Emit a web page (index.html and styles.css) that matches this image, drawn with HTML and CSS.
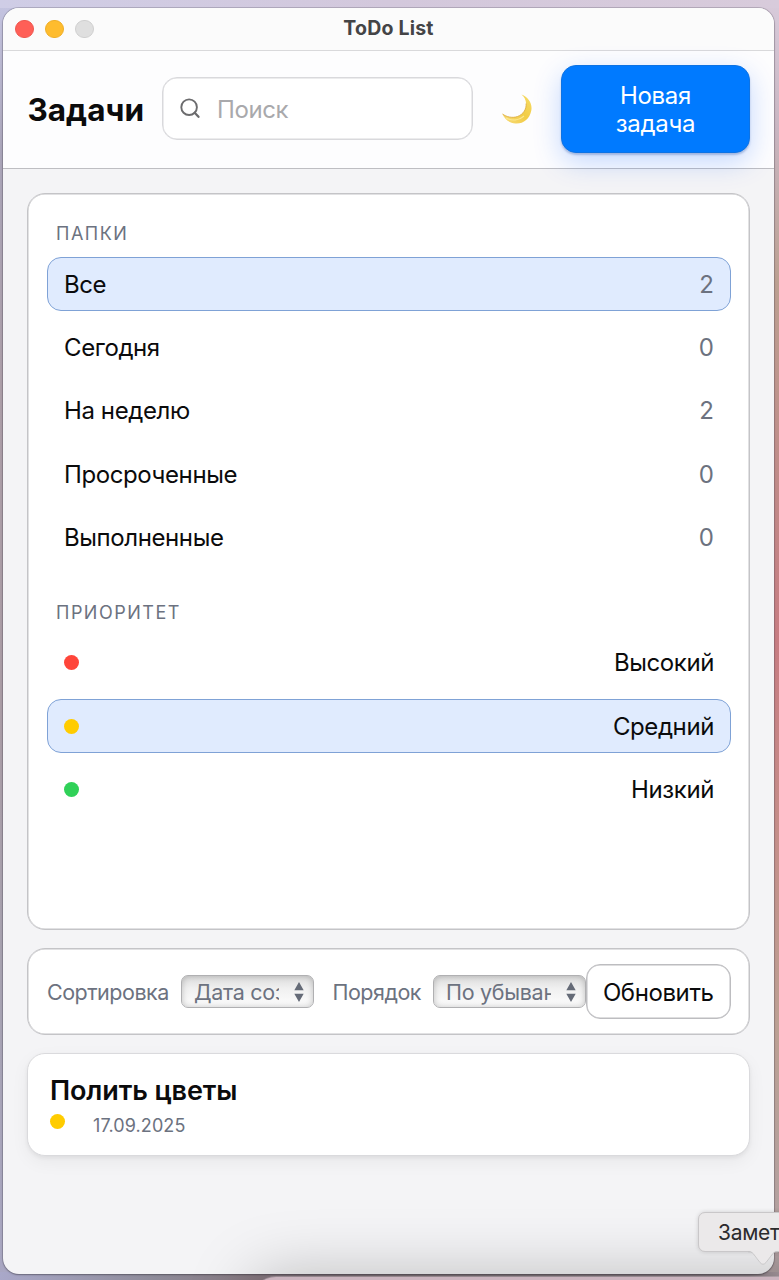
FILE: index.html
```html
<!DOCTYPE html>
<html lang="ru">
<head>
<meta charset="utf-8">
<title>ToDo List</title>
<link rel="stylesheet" href="styles.css">
</head>
<body>
<div class="desktop">
  <div class="window">
    <div class="titlebar">
      <div class="lights"><i class="light close"></i><i class="light minimize"></i><i class="light disabled"></i></div>
      <span class="window-title">ToDo List</span>
    </div>
    <header class="header">
      <h1 class="heading">Задачи</h1>
      <div class="search">
        <svg class="search-icon" width="22" height="22" viewBox="0 0 22 22" fill="none" stroke="#6c6c6e" stroke-linecap="round"><circle cx="9.1" cy="9.2" r="7.8" stroke-width="1.9"/><path d="M14.700 14.800l3.800 4" stroke-width="2.300"/></svg>
        <span class="placeholder">Поиск</span>
      </div>
      <svg class="moon" width="32" height="32" viewBox="0 0 32 32">
        <defs><linearGradient id="moonFill" x1="0" y1="1" x2="1" y2="0"><stop offset="0" stop-color="#f8dc7c"/><stop offset=".5" stop-color="#f2cc45"/><stop offset="1" stop-color="#f6dc67"/></linearGradient></defs>
        <path d="M20.5 1.4C27.5 4 31.6 10.500 30.300 17.500C28.800 26 22 31.100 14.500 30.500C8.500 30 3.500 26.500 1.500 21C5.500 24 11.500 25.300 16.500 23.500C22.500 21.300 25.500 16 25.100 10.500C24.900 6.500 23 3.500 20.500 1.400Z" fill="url(#moonFill)"/>
        <path d="M1.500 21C5.500 24 11.500 25.300 16.500 23.500C22.500 21.300 25.500 16 25.100 10.500" fill="none" stroke="#dba93b" stroke-width=".8"/>
        <path d="M5 25C11 28 18 27.500 23 23" fill="none" stroke="#fbe88f" stroke-width="1.200"/>
      </svg>
      <button class="primary">Новая<br>задача</button>
    </header>
    <main class="content">
      <nav class="panel sidebar">
        <h2 class="section">Папки</h2>
        <div class="row active"><span>Все</span><span class="count">2</span></div>
        <div class="row"><span>Сегодня</span><span class="count">0</span></div>
        <div class="row"><span>На неделю</span><span class="count">2</span></div>
        <div class="row"><span>Просроченные</span><span class="count">0</span></div>
        <div class="row"><span>Выполненные</span><span class="count">0</span></div>
        <h2 class="section priority">Приоритет</h2>
        <div class="row"><i class="dot red"></i><span>Высокий</span></div>
        <div class="row active"><i class="dot yellow"></i><span>Средний</span></div>
        <div class="row"><i class="dot green"></i><span>Низкий</span></div>
      </nav>
      <section class="panel toolbar">
        <span class="label sort-label">Сортировка</span>
        <div class="select sort"><span class="value">Дата соз</span><svg class="arrows" width="10" height="20" viewBox="0 0 10 20" fill="#656b77"><path d="M5 0l4.700 8.200h-9.400zM5 20l4.700-8.200h-9.400z"/></svg></div>
        <span class="label order-label">Порядок</span>
        <div class="select order"><span class="value">По убыван</span><svg class="arrows" width="10" height="20" viewBox="0 0 10 20" fill="#656b77"><path d="M5 0l4.700 8.200h-9.400zM5 20l4.700-8.200h-9.400z"/></svg></div>
        <button class="refresh">Обновить</button>
      </section>
      <article class="card">
        <h3 class="card-title">Полить цветы</h3>
        <div class="meta"><i class="dot yellow"></i><time class="date">17.09.2025</time></div>
      </article>
    </main>
  </div>
  <div class="dock-clip"><div class="dock"></div></div>
  <div class="tooltip"><span>Заметки</span><svg class="tip" width="30" height="15" viewBox="0 0 30 15"><path d="M0 0C4 0 5 2 7 5L12 11.500Q15 15 18 11.500L23 5C25 2 26 0 30 0Z" fill="#ebe9ea"/><path d="M0 .8C4 .8 5 2 7 5L12 11.500Q15 15 18 11.500L23 5C25 2 26 .8 30 .8" fill="none" stroke="#c3c1c3" stroke-width=".8"/></svg></div>
</div>
</body>
</html>
```
FILE: styles.css
```css
* { box-sizing: border-box; }
body { margin: 0; font-family: Inter, "Noto Sans", sans-serif; color: #0b0b0c; }
h1, h2, h3 { margin: 0; }
button { font: inherit; margin: 0; padding: 0; }
i { display: block; flex: none; }

.desktop {
  position: relative;
  width: 779px;
  height: 1280px;
  overflow: hidden;
  padding: 8px 5px 6px 3px;
  background:
    linear-gradient(90deg, #cfcde6, #d3c8dc 50%, #d8cbdb) 0 0 / 100% 8px no-repeat,
    linear-gradient(90deg, #a9a8c9, #8e8b99 20%, #86777f 33%, #8b7f86 96%, #ab9da3) 0 1272px / 100% 8px no-repeat,
    linear-gradient(#c5c5e2, #aaa5b9 12%, #ac9ea8 30%, #aa9ca5 55%, #a7a2b0 75%, #a9a7c3) 0 0 / 20px 100% no-repeat,
    linear-gradient(#d8cbdb, #c9b6c2 10%, #bca091 22%, #c08a88 38%, #c77c82 50%, #c58e89 65%, #bca093 80%, #b0a1a4) 100% 0 / 24px 100% no-repeat;
}

.window {
  display: flex;
  flex-direction: column;
  width: 771px;
  height: 1266px;
  overflow: hidden;
  border-radius: 16px;
  background: #f4f4f6;
  box-shadow: 0 0 0 1px rgba(80, 75, 90, .25), 0 1px 2px rgba(0, 0, 0, .3);
}
.titlebar {
  position: relative;
  display: flex;
  align-items: center;
  justify-content: center;
  flex: none;
  height: 43px;
  border-bottom: 1px solid #d9d9db;
  background: #fbfbfb;
}
.lights { position: absolute; left: 12px; top: 11.500px; display: flex; gap: 11.500px; }
.light { width: 18.500px; height: 18.500px; border-radius: 50%; border: 1px solid; }
.close { background: #ff5f57; border-color: #ee574f; }
.minimize { background: #febc2e; border-color: #efae27; }
.disabled { background: #dfdfdf; border-color: #cfcfcf; }
.window-title { font-size: 19.500px; font-weight: 700; color: #444446; line-height: 24px; margin-top: -3px; letter-spacing: .2px; }

.header {
  display: flex;
  align-items: center;
  flex: none;
  height: 118px;
  padding: 0 24px 2px 24.500px;
  background: #fdfdfe;
  border-bottom: 1.500px solid #bebec2;
}
.heading { width: 134.500px; flex: none; padding-top: 2px; font-size: 31.500px; line-height: 38px; font-weight: 700; letter-spacing: 0; }
.search {
  display: flex;
  align-items: center;
  flex: none;
  width: 311px;
  height: 63px;
  padding-left: 17px;
  border: 1px solid #d9d9dc;
  box-shadow: inset 0 0 0 .5px #d9d9dc;
  border-radius: 15px;
  background: #fff;
}
.search-icon { margin-top: 1px; }
.placeholder { margin-left: 15px; padding-top: 2px; font-size: 24px; color: #a9a9ac; letter-spacing: -.4px; }
.moon { flex: none; margin-left: 27.500px; }
.primary {
  flex: none;
  width: 189px;
  height: 88px;
  padding-top: 2px;
  margin-left: auto;
  border: 1px solid #0d73e4;
  border-radius: 15px;
  background: #007aff;
  color: #fff;
  font-size: 24px;
  line-height: 27.500px;
  letter-spacing: -.3px;
  box-shadow: 0 2px 2px rgba(40, 80, 160, .3), 0 9px 28px rgba(0, 90, 255, .23);
  position: relative;
  z-index: 1;
}

.content { display: flex; flex-direction: column; gap: 18px; padding: 24px 24px 0; }
.panel { border: 1px solid #c4c4c7; box-shadow: inset 0 0 0 .5px #c4c4c7; border-radius: 18px; background: #fff; }
.sidebar { height: 737px; padding: 27px 18.500px 0 19px; }
.section {
  height: 36px;
  padding-left: 9px;
  font-size: 18px;
  line-height: 26px;
  font-weight: 400;
  letter-spacing: 1.500px;
  text-transform: uppercase;
  color: #6c7280;
}
.section.priority { margin-top: 35.400px; height: 35.700px; }
.row {
  display: flex;
  align-items: center;
  justify-content: space-between;
  height: 54px;
  padding: 0 15.500px 0 16px;
  border: 1px solid transparent;
  border-radius: 14px;
  font-size: 24px;
  letter-spacing: -.4px;
}
.row + .row { margin-top: 9.400px; }
.row.active { background: #e0ebfe; border-color: #7fa2d6; }
.count { color: #6c7280; letter-spacing: 0; }
.dot { width: 15px; height: 15px; border-radius: 50%; }
.red { background: #ff453a; }
.yellow { background: #ffcc00; }
.green { background: #30d158; }

.toolbar { display: flex; align-items: center; height: 87px; padding: 0 18px 0 19px; }
.label { flex: none; font-size: 21.500px; color: #6c7280; letter-spacing: -.5px; }
.sort-label { width: 134px; }
.order-label { width: 100.500px; }
.select {
  display: flex;
  align-items: center;
  justify-content: space-between;
  flex: none;
  height: 33px;
  padding: 0 10px 0 12px;
  border: 1px solid #b0b0b2;
  border-radius: 7px;
  color: #6c7280;
  font-size: 21.500px;
  letter-spacing: -.3px;
  background: linear-gradient(#dcdcdc, #f0f0f0 40%, #fdfdfd);
  box-shadow: inset 0 0 6px rgba(0, 0, 0, .22);
}
.sort { width: 133px; margin-right: 18.500px; }
.order { width: 153px; }
.value { overflow: hidden; white-space: nowrap; }
.sort .value { width: 85px; }
.order .value { width: 105px; }
.arrows { position: relative; left: 1px; }
.refresh {
  flex: none;
  width: 144.500px;
  height: 55px;
  padding-top: 1px;
  border: 1px solid #bdbdc0;
  box-shadow: inset 0 0 0 .5px #bdbdc0;
  border-radius: 14px;
  background: #fff;
  color: #0b0b0c;
  font-size: 24px;
  letter-spacing: -.4px;
}

.card {
  height: 103px;
  padding: 20px 22px 0;
  border: 1px solid #dadadd;
  border-radius: 18px;
  background: #fff;
  box-shadow: 0 2px 4px rgba(0, 0, 0, .06), 0 6px 18px rgba(0, 0, 0, .05);
}
.card-title { font-size: 27px; line-height: 34px; font-weight: 600; letter-spacing: -.1px; }
.meta { display: flex; align-items: flex-start; gap: 28px; padding-top: 5.500px; }
.date { font-size: 18px; line-height: 24px; letter-spacing: .1px; color: #6c7280; }

/* The dock rises over the bottom edge and shades the window above it. */
.dock-clip { position: absolute; left: 0; right: 0; bottom: 0; height: 110px; overflow: hidden; pointer-events: none; }
.dock {
  position: absolute;
  left: 252px;
  top: 107px;
  width: 700px;
  height: 90px;
  border-radius: 24px;
  background: #cbb4bf;
  box-shadow: 0 0 0 1px rgba(230, 210, 220, .3), 0 0 65px rgba(0, 0, 0, .25);
}
.tooltip {
  position: absolute;
  left: 698px;
  top: 1212px;
  width: 130px;
  height: 40px;
  padding-left: 19px;
  border: 1px solid #c9c7c9;
  border-radius: 7px;
  background: #ebe9ea;
  color: #2b2b2d;
  font-size: 21px;
  line-height: 39px;
  letter-spacing: -.3px;
  box-shadow: 0 0 4px rgba(0, 0, 0, .15);
}
.tip { position: absolute; left: 49px; top: 37.500px; }
```
